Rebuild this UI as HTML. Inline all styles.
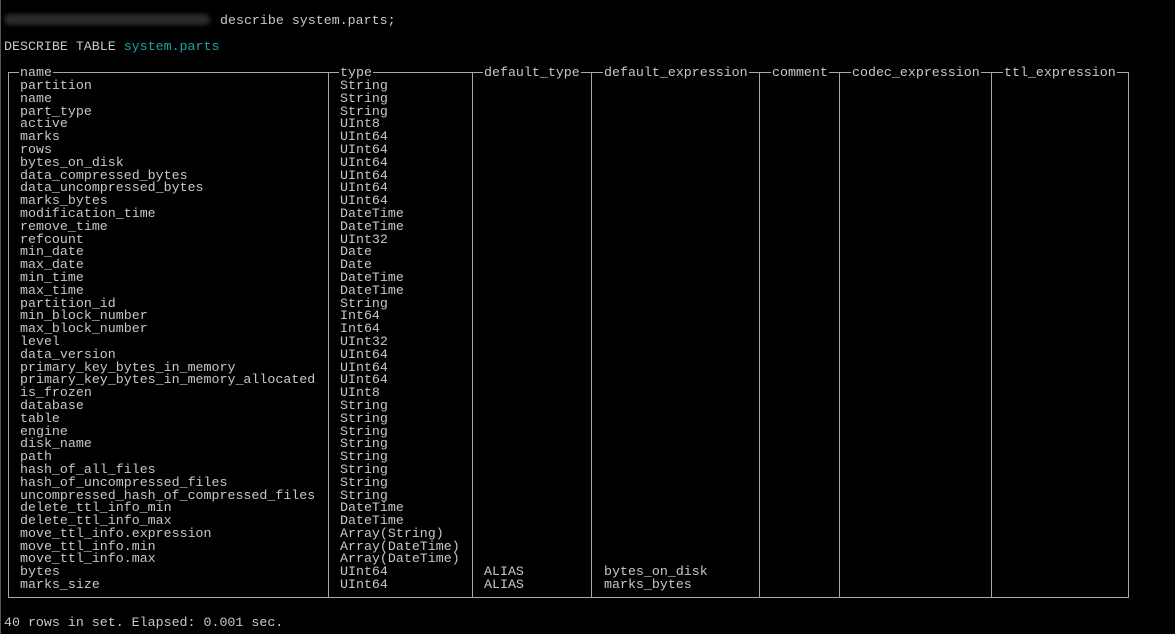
<!DOCTYPE html>
<html><head><meta charset="utf-8"><style>
html,body{margin:0;padding:0;background:#000;width:1175px;height:634px;overflow:hidden;position:relative}
.t{position:absolute;font-family:"Liberation Mono","DejaVu Sans Mono",monospace;font-size:13.3px;line-height:12.8px;color:#c8c8c8;white-space:pre;margin:0}
.h{background:#000;padding:0 1px;margin-left:-1px}
.l{position:absolute;background:#a8a8a8}
</style></head><body>
<div class="l" style="left:0;top:0;width:1px;height:634px;background:#555"></div>
<div style="position:absolute;left:4px;top:14px;width:206px;height:11px;background:#2a2a2a;border-radius:5px;filter:blur(2px)"></div>
<div class="t" style="left:220px;top:15px">describe system.parts;</div>
<div class="t" style="left:4px;top:41px">DESCRIBE TABLE <span style="color:#1aa3a3">system.parts</span></div>

<div class="l" style="left:8px;top:72px;width:1121px;height:1px"></div>
<div class="l" style="left:8px;top:597px;width:1121px;height:1px"></div>
<div class="l" style="left:8px;top:72px;width:1px;height:526px"></div>
<div class="l" style="left:1128px;top:72px;width:1px;height:526px"></div>
<div class="l" style="left:328px;top:72px;width:1px;height:526px"></div>
<div class="l" style="left:472px;top:72px;width:1px;height:526px"></div>
<div class="l" style="left:591px;top:72px;width:1px;height:526px"></div>
<div class="l" style="left:759px;top:72px;width:1px;height:526px"></div>
<div class="l" style="left:839px;top:72px;width:1px;height:526px"></div>
<div class="l" style="left:991px;top:72px;width:1px;height:526px"></div>

<div class="t h" style="left:20px;top:67px">name</div>
<div class="t h" style="left:340px;top:67px">type</div>
<div class="t h" style="left:484px;top:67px">default_type</div>
<div class="t h" style="left:604px;top:67px">default_expression</div>
<div class="t h" style="left:772px;top:67px">comment</div>
<div class="t h" style="left:852px;top:67px">codec_expression</div>
<div class="t h" style="left:1004px;top:67px">ttl_expression</div>

<div class="t" style="left:20px;top:80px">partition
name
part_type
active
marks
rows
bytes_on_disk
data_compressed_bytes
data_uncompressed_bytes
marks_bytes
modification_time
remove_time
refcount
min_date
max_date
min_time
max_time
partition_id
min_block_number
max_block_number
level
data_version
primary_key_bytes_in_memory
primary_key_bytes_in_memory_allocated
is_frozen
database
table
engine
disk_name
path
hash_of_all_files
hash_of_uncompressed_files
uncompressed_hash_of_compressed_files
delete_ttl_info_min
delete_ttl_info_max
move_ttl_info.expression
move_ttl_info.min
move_ttl_info.max
bytes
marks_size</div>
<div class="t" style="left:340px;top:80px">String
String
String
UInt8
UInt64
UInt64
UInt64
UInt64
UInt64
UInt64
DateTime
DateTime
UInt32
Date
Date
DateTime
DateTime
String
Int64
Int64
UInt32
UInt64
UInt64
UInt64
UInt8
String
String
String
String
String
String
String
String
DateTime
DateTime
Array(String)
Array(DateTime)
Array(DateTime)
UInt64
UInt64</div>
<div class="t" style="left:484px;top:566px">ALIAS
ALIAS</div>
<div class="t" style="left:604px;top:566px">bytes_on_disk
marks_bytes</div>

<div class="t" style="left:4px;top:617px">40 rows in set. Elapsed: 0.001 sec.</div>
</body></html>
